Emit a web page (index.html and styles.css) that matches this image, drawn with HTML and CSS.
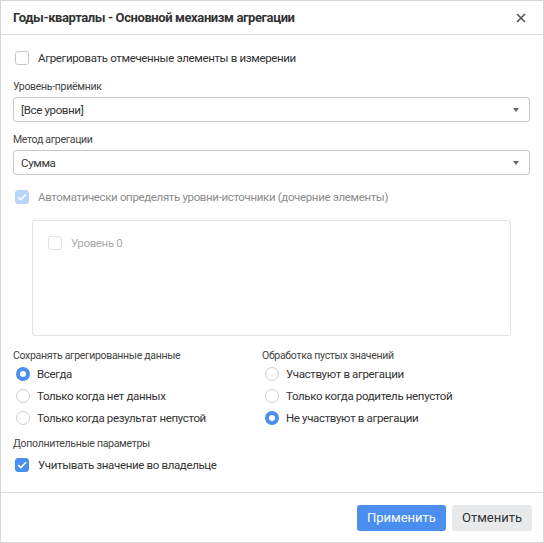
FILE: index.html
```html
<!DOCTYPE html>
<html lang="ru">
<head>
    <meta charset="UTF-8">
    <meta name="viewport" content="width=device-width, initial-scale=1.0">
    <title>Годы-кварталы - Основной механизм агрегации</title>
    <link rel="stylesheet" href="styles.css">
</head>
<body>
    <div class="dialog">
        <!-- ЗАГОЛОВОК -->
        <div class="dialog-head">
            <span class="dialog-title">Годы-кварталы - Основной механизм агрегации</span>
            <span class="dialog-close">
                <svg width="10" height="10" viewBox="0 0 10 10"><path d="M1 1L9 9M9 1L1 9" stroke="#555" stroke-width="1.6"/></svg>
            </span>
        </div>

        <!-- СОДЕРЖИМОЕ -->
        <div class="dialog-body">
            <label class="check-row first">
                <span class="box"></span>
                <span>Агрегировать отмеченные элементы в измерении</span>
            </label>

            <div class="field-label">Уровень-приёмник</div>
            <div class="select">
                <span>[Все уровни]</span>
                <span class="arrow"></span>
            </div>

            <div class="field-label">Метод агрегации</div>
            <div class="select">
                <span>Сумма</span>
                <span class="arrow"></span>
            </div>

            <label class="check-row auto disabled">
                <span class="box checked">
                    <svg width="10" height="8" viewBox="0 0 10 8"><path d="M1 4L3.8 6.6L9 1.2" fill="none" stroke="#fff" stroke-width="1.6"/></svg>
                </span>
                <span>Автоматически определять уровни-источники (дочерние элементы)</span>
            </label>

            <div class="levels">
                <label class="check-row level">
                    <span class="box"></span>
                    <span>Уровень 0</span>
                </label>
            </div>

            <div class="groups">
                <div class="group">
                    <div class="field-label">Сохранять агрегированные данные</div>
                    <label class="radio-row"><span class="radio on"></span>Всегда</label>
                    <label class="radio-row"><span class="radio"></span>Только когда нет данных</label>
                    <label class="radio-row"><span class="radio"></span>Только когда результат непустой</label>
                </div>
                <div class="group">
                    <div class="field-label">Обработка пустых значений</div>
                    <label class="radio-row"><span class="radio"></span>Участвуют в агрегации</label>
                    <label class="radio-row"><span class="radio"></span>Только когда родитель непустой</label>
                    <label class="radio-row"><span class="radio on"></span>Не участвуют в агрегации</label>
                </div>
            </div>

            <div class="field-label extra">Дополнительные параметры</div>
            <label class="check-row owner">
                <span class="box checked">
                    <svg width="10" height="8" viewBox="0 0 10 8"><path d="M1 4L3.8 6.6L9 1.2" fill="none" stroke="#fff" stroke-width="1.6"/></svg>
                </span>
                <span>Учитывать значение во владельце</span>
            </label>
        </div>

        <!-- КНОПКИ -->
        <div class="dialog-foot">
            <button type="button" class="btn primary">Применить</button>
            <button type="button" class="btn">Отменить</button>
        </div>
    </div>
</body>
</html>
```
FILE: styles.css
```css
* {
    box-sizing: border-box;
}
body {
    margin: 0;
    font-family: Roboto, "Liberation Sans", sans-serif;
    color: #333;
    background: #fff;
}
.dialog {
    width: 544px;
    height: 543px;
    border: 1px solid #d6d6d6;
    display: flex;
    flex-direction: column;
}
.dialog-head {
    height: 34px;
    border-bottom: 1px solid #dcdce0;
    display: flex;
    align-items: center;
    justify-content: space-between;
    padding: 0 17px 0 12px;
    flex-shrink: 0;
}
.dialog-title {
    font-size: 13px;
    font-weight: 700;
    letter-spacing: -0.4px;
    color: #333;
}
.dialog-close {
    display: flex;
}
.dialog-body {
    flex: 1;
    padding: 12px 12px 0 12px;
}
.check-row {
    display: flex;
    align-items: center;
    height: 22px;
    font-size: 11.5px;
    letter-spacing: -0.35px;
    gap: 9px;
    padding-left: 2px;
}
.box {
    width: 14px;
    height: 14px;
    border: 1.5px solid #c6c6c6;
    border-radius: 3px;
    display: flex;
    align-items: center;
    justify-content: center;
    flex-shrink: 0;
}
.box.checked {
    background: #4a8ef0;
    border-color: #4a8ef0;
}
.disabled {
    color: #8c8c8c;
}
.disabled .box.checked {
    background: #b9d4fa;
    border-color: #b9d4fa;
}
.field-label {
    font-size: 10.5px;
    letter-spacing: -0.3px;
    line-height: 14px;
    color: #444;
    margin-top: 11px;
}
.select {
    margin-top: 3px;
    height: 25px;
    border: 1px solid #c8c8cc;
    border-radius: 3px;
    display: flex;
    align-items: center;
    justify-content: space-between;
    padding: 0 10px 0 7px;
    font-size: 11.5px;
    letter-spacing: -0.35px;
    margin-right: 1px;
}
.arrow {
    width: 0;
    height: 0;
    border-left: 3px solid transparent;
    border-right: 3px solid transparent;
    border-top: 4px solid #666;
}
.check-row.auto {
    margin-top: 11px;
}
.levels {
    margin: 12px 20px 0 19px;
    height: 116px;
    border: 1px solid #e2e2e2;
    border-radius: 3px;
    padding: 11px 0 0 13px;
}
.check-row.level {
    color: #aaa;
}
.level .box {
    border-color: #e0e0e0;
}
.groups {
    display: grid;
    grid-template-columns: 249px 1fr;
    margin-top: 2px;
}
.radio-row {
    display: flex;
    align-items: center;
    height: 22px;
    font-size: 11.5px;
    letter-spacing: -0.35px;
    gap: 7px;
    padding-left: 3px;
}
.radio {
    width: 14px;
    height: 14px;
    border: 1.5px solid #cfcfcf;
    border-radius: 50%;
    flex-shrink: 0;
}
.radio.on {
    border: 4.5px solid #4a8ef0;
    background: #fff;
}
.field-label.extra {
    margin-top: 8px;
}
.check-row.owner {
    margin-top: 3px;
}
.dialog-foot {
    height: 50px;
    border-top: 1px solid #dcdce0;
    display: flex;
    justify-content: flex-end;
    align-items: center;
    gap: 6px;
    padding: 0 11px 0 0;
    flex-shrink: 0;
}
.btn {
    height: 26px;
    border: none;
    border-radius: 3px;
    background: #e8e9eb;
    color: #333;
    font-family: Roboto, "Liberation Sans", sans-serif;
    font-size: 13px;
    padding: 0 10px;
    min-width: 80px;
}
.btn.primary {
    background: #4a8ef0;
    color: #fff;
    min-width: 89px;
}
```
